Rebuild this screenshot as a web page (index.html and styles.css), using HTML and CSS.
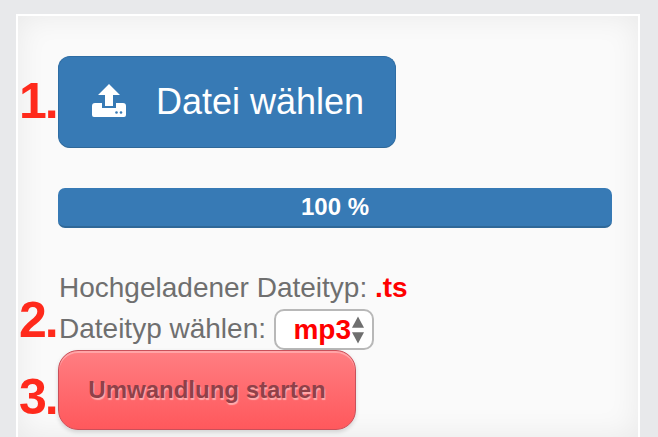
FILE: index.html
```html
<!DOCTYPE html>
<html lang="de">
<head>
    <meta charset="UTF-8">
    <title>Datei umwandeln</title>
    <link rel="stylesheet" href="styles.css">
</head>
<body>

<div class="panel">
    <div class="step-row upload-row">
        <span class="step-number step-one">1.</span>
        <button class="upload-btn">
            <svg class="upload-icon" viewBox="0 0 34 33" width="34" height="33">
                <path fill="#fff" d="M17 0 L28 11 H21 V22 H13 V11 H6 Z"/>
                <path fill="#fff" d="M3 19 H10 V24 H24 V19 H31 Q34 19 34 22 V31 Q34 33 32 33 H2 Q0 33 0 31 V22 Q0 19 3 19 Z"/>
                <circle cx="24.5" cy="28.5" r="1.3" fill="#377ab5"/>
                <circle cx="29" cy="28.5" r="1.3" fill="#377ab5"/>
            </svg>
            <span>Datei wählen</span>
        </button>
    </div>

    <div class="progress">100 %</div>

    <p class="info-line">Hochgeladener Dateityp: <b class="file-type">.ts</b></p>

    <div class="step-row select-row">
        <span class="step-number step-two">2.</span>
        <label class="info-line">Dateityp wählen:</label>
        <div class="select-box">
            <span class="select-value">mp3</span>
            <svg class="select-arrows" viewBox="0 0 13 29" width="12" height="28">
                <path fill="#6f6f6f" d="M6.5 0 L13 12 H0 Z"/>
                <path fill="#6f6f6f" d="M0 17 H13 L6.5 29 Z"/>
            </svg>
        </div>
    </div>

    <div class="step-row">
        <span class="step-number step-three">3.</span>
        <button class="start-btn">Umwandlung starten</button>
    </div>
</div>

</body>
</html>
```

FILE: styles.css
```css
html, body {
    margin: 0;
    height: 437px;
    overflow: hidden;
}
body {
    font-family: "Liberation Sans", Arial, sans-serif;
    background-color: #e8e9eb;
    padding: 14px 18px 0 16px;
    box-sizing: border-box;
}
.panel {
    height: 423px;
    box-sizing: border-box;
    border: 2px solid #fff;
    border-bottom: none;
    padding: 40px 26px 0 40px;
    background-color: #fafafa;
    box-shadow: inset 0 0 30px rgba(0, 0, 0, 0.07);
}
.step-row {
    position: relative;
    display: flex;
    align-items: center;
}
.step-number {
    position: absolute;
    left: -39px;
    color: #ff2a1c;
    font-size: 50px;
    font-weight: bold;
    line-height: 48px;
    letter-spacing: -2px;
}
.step-one {
    top: 21px;
}
.step-two {
    top: -13px;
}
.step-three {
    top: 23px;
}
.upload-btn {
    width: 338px;
    height: 92px;
    display: flex;
    align-items: center;
    padding: 0 0 0 33px;
    background-color: #377ab5;
    border: 1px solid #2e6da4;
    border-bottom-color: #2f6898;
    border-radius: 12px;
    color: #fff;
    font-family: inherit;
    font-size: 36px;
}
.upload-icon {
    margin-right: 30px;
    margin-top: -3px;
}
.progress {
    margin-top: 40px;
    height: 40px;
    line-height: 38px;
    box-sizing: border-box;
    background-color: #377ab5;
    border-bottom: 2px solid #2f6898;
    border-radius: 7px;
    color: #fff;
    font-size: 24px;
    font-weight: bold;
    text-align: center;
}
.info-line {
    margin: 0;
    color: #6f6f6f;
    font-size: 28px;
    line-height: 30px;
}
.panel > .info-line {
    margin-top: 45px;
    padding-left: 1px;
}
.file-type {
    color: #ff0000;
}
.select-row {
    margin-top: 6px;
    padding-left: 1px;
}
.select-row .info-line {
    margin-top: -2px;
}
.select-box {
    width: 100px;
    height: 41px;
    box-sizing: border-box;
    margin-left: 8px;
    display: flex;
    align-items: center;
    justify-content: flex-end;
    gap: 1px;
    padding-right: 8px;
    background-color: #fff;
    border: 2px solid #b8b8b8;
    border-radius: 10px;
}
.select-value {
    color: #ff0000;
    font-size: 28px;
    font-weight: bold;
}
.start-btn {
    width: 298px;
    height: 80px;
    padding: 0;
    background: linear-gradient(#ff7e82, #ff585c);
    border: 1px solid #c9505a;
    border-radius: 20px;
    box-shadow: inset 0 2px 0 rgba(255, 255, 255, 0.3), 0 2px 4px rgba(0, 0, 0, 0.15);
    color: #8f4149;
    font-family: inherit;
    font-size: 24px;
    font-weight: bold;
    text-shadow: 1px 2px 1px rgba(255, 190, 190, 0.8);
}
```
